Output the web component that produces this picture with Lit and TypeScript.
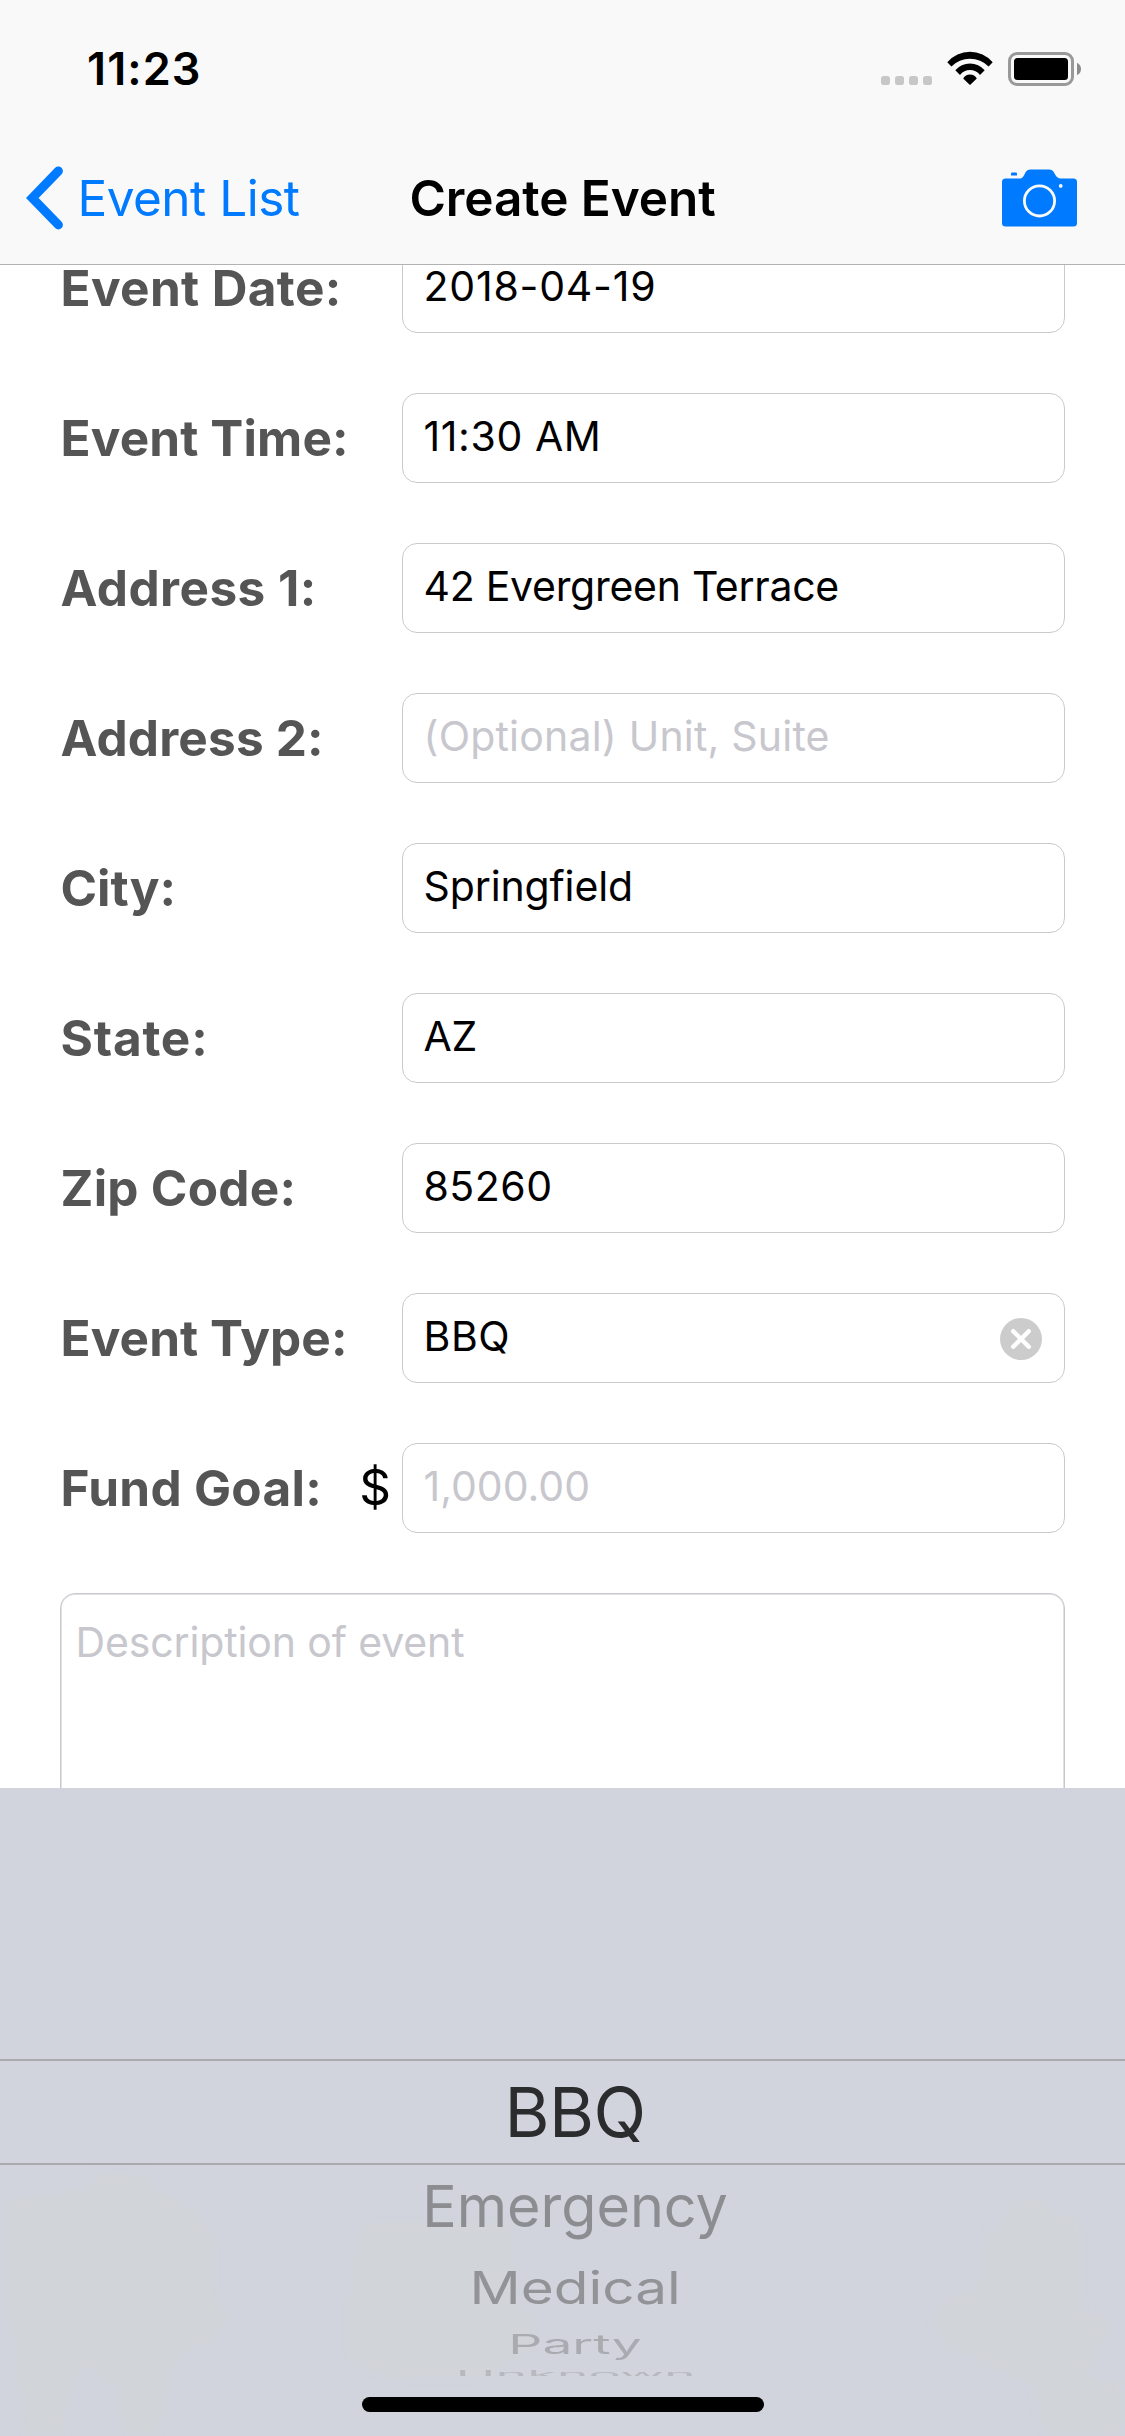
import { LitElement, html, css, svg, nothing } from "lit";
import { customElement, property } from "lit/decorators.js";
import { classMap } from "lit/directives/class-map.js";
import { styleMap } from "lit/directives/style-map.js";

interface Field {
  label: string;
  text: string;
  placeholder?: boolean;
  clearable?: boolean;
  prefix?: string;
  labelTracking?: number;
  textTracking?: number;
}

const FIELDS: Field[] = [
  { label: "Event Date:", text: "2018-04-19", labelTracking: 0.36, textTracking: 0.78 },
  { label: "Event Time:", text: "11:30 AM", labelTracking: 0.14, textTracking: 0.6 },
  { label: "Address 1:", text: "42 Evergreen Terrace", labelTracking: 0.45, textTracking: -0.28 },
  { label: "Address 2:", text: "(Optional) Unit, Suite", placeholder: true, labelTracking: 0.17, textTracking: 0.2 },
  { label: "City:", text: "Springfield", labelTracking: 0, textTracking: -0.12 },
  { label: "State:", text: "AZ", labelTracking: 0.8, textTracking: -0.2 },
  { label: "Zip Code:", text: "85260", labelTracking: 0.27, textTracking: 0.5 },
  { label: "Event Type:", text: "BBQ", clearable: true, labelTracking: 0.1, textTracking: 0.6 },
  { label: "Fund Goal:", text: "1,000.00", placeholder: true, prefix: "$", labelTracking: 0.29, textTracking: 0 },
];

/** Wheel rows: each one is squeezed further as it turns away from the viewer. */
const OPTIONS = [
  { text: "Emergency", height: 82, sx: 0.835, sy: 0.84, color: "#8c8d91" },
  { text: "Medical", height: 79, sx: 0.824, sy: 0.66, color: "#919397" },
  { text: "Party", height: 36, sx: 0.775, sy: 0.394, color: "#a9abb0" },
  { text: "Unknown", height: 24, sx: 0.782, sy: 0.15, color: "#b7b9be" },
];

@customElement("status-bar")
class StatusBar extends LitElement {
  static styles = css`
    :host {
      display: flex;
      align-items: center;
      justify-content: space-between;
      box-sizing: border-box;
      height: 132px;
      padding: 5px 44px 0 87px;
    }
    .time {
      font-size: 45px;
      font-weight: 600;
      letter-spacing: 1.1px;
    }
    .icons {
      display: flex;
      gap: 15px;
    }
    svg {
      display: block;
    }
  `;
  render() {
    return html`
      <span class="time">11:23</span>
      <div class="icons">
        <svg width="51" height="35" viewBox="881 51 51 35" fill="#c7c7c7">
          ${[881, 895, 909, 923].map((x) => svg`<rect x=${x} y="76" width="9" height="9" rx="2.8" />`)}
        </svg>
        <svg width="46" height="35" viewBox="947 51 46 35">
          <path d="M947.3 62.2A29.8 29.8 0 0 1 992.7 62.2L988.6 66.4A26.3 26.3 0 0 0 951.4 66.4Z" />
          <path d="M955.3 70.2A19.3 19.3 0 0 1 984.7 70.2L980 74.9A12.8 12.8 0 0 0 960 74.9Z" />
          <path d="M963.2 78.6A7.8 7.8 0 0 1 976.8 78.6L970.6 84.6Q970 85.1 969.4 84.6Z" />
        </svg>
        <svg width="73" height="35" viewBox="1008 51 73 35">
          <rect x="1009.5" y="53.5" width="63" height="31" rx="7.5" fill="none" stroke="#999" stroke-width="3" />
          <rect x="1014" y="58" width="54" height="22" rx="3.5" />
          <path d="M1077 62.8Q1081 64.8 1081 69T1077 75.2Z" fill="#8c8c8c" />
        </svg>
      </div>
    `;
  }
}

@customElement("nav-bar")
class NavBar extends LitElement {
  static styles = css`
    :host {
      display: grid;
      grid-template-columns: 1fr auto 1fr;
      align-items: center;
      box-sizing: border-box;
      height: 132px;
      padding: 0 48px 0 26px;
      font-size: 49.5px;
    }
    .back {
      display: flex;
      align-items: center;
      gap: 13.4px;
      color: #007aff;
      letter-spacing: -0.5px;
      white-space: nowrap;
    }
    .title {
      font-weight: 600;
      margin-left: 22px;
      letter-spacing: -0.07px;
      white-space: nowrap;
    }
    .camera {
      justify-self: end;
      display: block;
    }
  `;
  render() {
    return html`
      <div class="back">
        <svg width="38" height="64" viewBox="26 166.5 38 64" fill="none" stroke="#007aff">
          <path d="M58.4 171.5L32.2 198.5L58.4 225.4" stroke-width="9" stroke-linecap="round" />
        </svg>
        <span>Event List</span>
      </div>
      <span class="title">Create Event</span>
      <svg class="camera" width="75" height="58" viewBox="1002 168.5 75 58">
        <path
          fill="#007aff"
          d="M1005.5 178H1019Q1022.6 178 1024.2 174.4L1025.4 172Q1027 169 1030.5 169H1049Q1052.5 169 1054 172L1055.4 174.6Q1057.4 178 1060.5 178H1073.5Q1077 178 1077 181.5V222.5Q1077 226 1073.5 226H1005.5Q1002 226 1002 222.5V181.5Q1002 178 1005.5 178Z"
        />
        <path fill="#007aff" d="M1011 175V173Q1011 172 1012 172H1016Q1017 172 1017 173V175Z" />
        <circle cx="1039.5" cy="200.4" r="15.1" fill="none" stroke="#f9f9f9" stroke-width="2.8" />
        <circle cx="1060.7" cy="185.4" r="1.9" fill="#f9f9f9" />
      </svg>
    `;
  }
}

@customElement("form-row")
class FormRow extends LitElement {
  @property({ attribute: false }) field!: Field;
  static styles = css`
    :host {
      display: flex;
      height: 90px;
      flex: none;
    }
    .caption {
      display: flex;
      justify-content: space-between;
      box-sizing: border-box;
      width: 342px;
      padding: 0 11px 0 0.5px;
      font-size: 49.5px;
      line-height: 90px;
      white-space: nowrap;
    }
    .label {
      color: #555;
      font-weight: 700;
    }
    .prefix {
      line-height: 88px;
    }
    .box {
      display: flex;
      flex: 1;
      align-items: center;
      justify-content: space-between;
      box-sizing: border-box;
      padding: 0 22px 0 20.5px;
      border: 1px solid #cacaca;
      border-radius: 15px;
      font-size: 41px;
      line-height: 84px;
      white-space: nowrap;
    }
    .text {
      height: 88px;
    }
    .placeholder {
      color: #c7c7cd;
    }
    .clear {
      display: block;
      margin-top: 2px;
    }
  `;
  render() {
    const f = this.field;
    return html`
      <div class="caption">
        <span class="label" style=${styleMap({ letterSpacing: `${f.labelTracking ?? 0}px` })}>${f.label}</span>
        ${f.prefix ? html`<span class="prefix">${f.prefix}</span>` : nothing}
      </div>
      <div class="box">
        <span
          class=${classMap({ text: true, placeholder: !!f.placeholder })}
          style=${styleMap({ letterSpacing: `${f.textTracking ?? 0}px` })}
          >${f.text}</span
        >
        ${f.clearable
          ? html`<svg class="clear" width="42" height="42" viewBox="0 0 42 42">
              <circle cx="21" cy="21" r="21" fill="#ccc" />
              <path d="M13.2 13.2L28.8 28.8M28.8 13.2L13.2 28.8" stroke="#fff" stroke-width="4.4" stroke-linecap="round" />
            </svg>`
          : nothing}
      </div>
    `;
  }
}

@customElement("option-picker")
class OptionPicker extends LitElement {
  static styles = css`
    :host {
      display: block;
      position: relative;
      height: 648px;
      background: #d1d4dd;
    }
    .haze {
      position: absolute;
      left: 0;
      top: 372px;
      display: block;
      filter: blur(5px);
    }
    .wheel {
      position: relative;
      display: flex;
      flex-direction: column;
      box-sizing: border-box;
      height: 588px;
      padding-top: 271px;
      overflow: hidden;
      font-size: 68.8px;
      line-height: 84px;
    }
    .row {
      display: flex;
      flex: none;
      align-items: center;
      justify-content: center;
      padding-left: 26px;
    }
    .selected {
      height: 102px;
      padding-left: 25px;
      border-top: 2px solid #a9aaae;
      border-bottom: 2px solid #a9aaae;
      color: #2b2c2e;
      letter-spacing: -0.5px;
    }
    .option {
      flex: none;
    }
    .home {
      position: absolute;
      left: 362px;
      bottom: 24px;
      width: 402px;
      height: 15px;
      border-radius: 7.5px;
      background: #000;
    }
  `;
  render() {
    return html`
      <svg class="haze" width="1125" height="276" viewBox="0 2160 1125 276" fill="#d1d4d8">
        <path d="M8 2200L82 2190L100 2174H138L156 2188L198 2214L215 2240V2296L228 2318L214 2342L182 2352L168 2385L156 2436H124L118 2390L84 2364L66 2400L62 2436H22L16 2340L8 2320Z" />
        <path d="M366 2222H510L516 2300L532 2316L528 2350L508 2366L480 2379H400L348 2362V2300L356 2250Z" />
        <path d="M1010 2200H1046L1052 2212L1082 2222V2310L1112 2320L1100 2352L1084 2372L1100 2384L1122 2380V2436H1046L1034 2384L990 2366L944 2344L934 2320L948 2298L978 2288L988 2232L1008 2222Z" />
      </svg>
      <div class="wheel">
        <div class="row selected"><span class="option">BBQ</span></div>
        ${OPTIONS.map(
          (o) => html`<div class="row" style=${styleMap({ height: `${o.height}px`, color: o.color })}>
            <span class="option" style=${styleMap({ transform: `scale(${o.sx}, ${o.sy})` })}>${o.text}</span>
          </div>`
        )}
      </div>
      <div class="home"></div>
    `;
  }
}

@customElement("app-root")
class AppRoot extends LitElement {
  static styles = css`
    :host {
      display: flex;
      flex-direction: column;
      width: 1125px;
      height: 2436px;
      overflow: hidden;
      background: #fff;
      color: #000;
      font-family: "Inter", "Liberation Sans", sans-serif;
    }
    .header {
      flex: none;
      background: #f9f9f9;
      border-bottom: 1px solid #b2b2b2;
    }
    .form {
      flex: 1;
      min-height: 0;
      overflow: hidden;
      padding: 0 60px;
    }
    .rows {
      display: flex;
      flex-direction: column;
      gap: 60px;
      margin-top: -22px;
    }
    .description {
      flex: none;
      box-sizing: border-box;
      height: 300px;
      padding: 23px 14.5px;
      border: 1px solid #c8c8cd;
      border-radius: 15px;
      box-shadow: inset 0 0 0 1px #e2e2e6;
      color: #c7c7cd;
      font-size: 41px;
      line-height: 50px;
      letter-spacing: -0.13px;
    }
    option-picker {
      flex: none;
    }
  `;
  render() {
    return html`
      <div class="header">
        <status-bar></status-bar>
        <nav-bar></nav-bar>
      </div>
      <div class="form">
        <div class="rows">
          ${FIELDS.map((f) => html`<form-row .field=${f}></form-row>`)}
          <div class="description">Description of event</div>
        </div>
      </div>
      <option-picker></option-picker>
    `;
  }
}
